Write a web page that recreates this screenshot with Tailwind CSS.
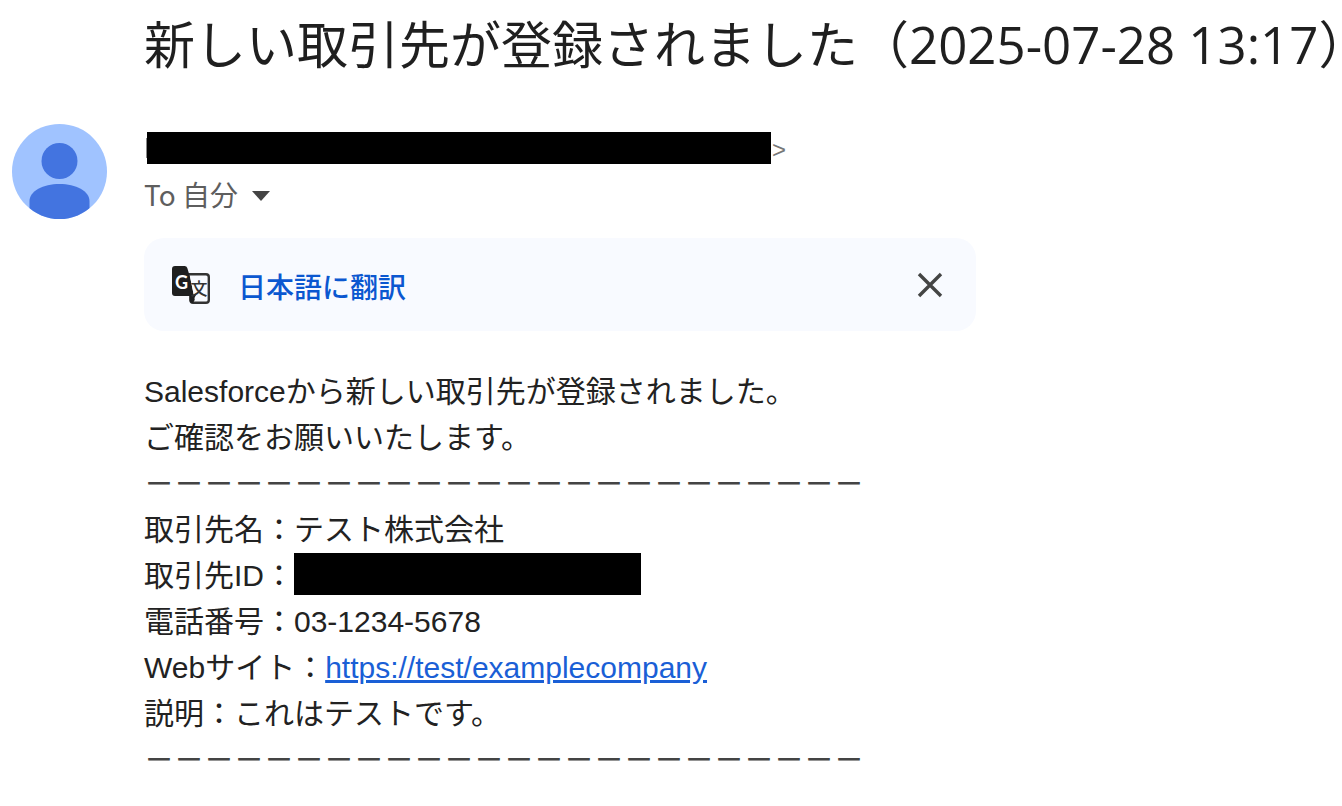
<!DOCTYPE html>
<html lang="ja">
<head>
<meta charset="utf-8">
<meta name="viewport" content="width=device-width, initial-scale=1">
<title>新しい取引先が登録されました</title>
<script src="https://cdn.jsdelivr.net/npm/@tailwindcss/browser@4"></script>
</head>
<body class="bg-white font-['Liberation_Sans','Noto_Sans_CJK_JP',sans-serif] text-[#222222]">
<main class="pb-6">
  <h1 class="pt-1 pl-36 text-[51px] leading-[80px] whitespace-nowrap text-[#1f1f1f] font-['Open_Sans','Noto_Sans_CJK_JP',sans-serif]">新しい取引先が登録されました（2025-07-28 13:17<span class="[font-feature-settings:'halt']">）</span></h1>
  <article class="mt-10 flex items-start gap-[37px] pl-3">
    <svg class="size-[95px] shrink-0" viewBox="0 0 95 95" role="img" aria-label="プロフィール画像">
      <defs><clipPath id="avatar"><circle cx="47.500" cy="47.500" r="47.500"/></clipPath></defs>
      <g clip-path="url(#avatar)">
        <rect width="95" height="95" fill="#a0c3ff"/>
        <circle cx="47.500" cy="37" r="18" fill="#4374e0"/>
        <path d="M17.500 100V77C17.500 67 31 60 47.500 60S77.500 67 77.500 77V100Z" fill="#4374e0"/>
      </g>
    </svg>
    <div class="min-w-0 flex-1">
      <header class="pt-2">
        <div class="flex h-8 items-center text-2xl text-[#777777]">
          <span class="ml-0.5 h-5 w-px bg-[#888888]"></span>
          <span class="mr-px h-8 w-[624px] bg-black"></span>
          <span class="pt-1">&gt;</span>
        </div>
        <button type="button" class="mt-2.5 flex items-center gap-3.5 text-[28px] leading-10 text-[#5e5e5e] font-['Noto_Sans_CJK_JP',sans-serif]">
          <span>To 自分</span>
          <svg class="mt-1 h-[10px] w-[18px]" viewBox="0 0 18 10" aria-hidden="true"><path d="M0 0H18L9 10Z" fill="#444444"/></svg>
        </button>
      </header>
      <section class="mt-6 flex h-[93px] max-w-[832px] items-center rounded-[20px] bg-[#f8faff] pr-8 pl-7">
        <svg class="size-[38px]" viewBox="0 0 38 38" aria-hidden="true">
          <path d="M16 8.300H34Q36.800 8.300 36.800 11V34Q36.800 36.800 34 36.800H21Q18.500 36.800 18.500 34V30Z" fill="#f8faff" stroke="#333333" stroke-width="2.400"/>
          <path d="M3 0H12.500Q14.700 0 15.300 2L18 11L22 30L25 30L21 37Q17.500 37 17.500 34V30H3Q0 30 0 27V3Q0 0 3 0Z" fill="#1f1f1f"/>
          <path d="M18 10H35V35H23L22 30Z" fill="#f8faff"/>
          <path d="M18 29H24L20 36Z" fill="#1f1f1f"/>
          <text x="9.500" y="22.500" text-anchor="middle" font-family="Lato, sans-serif" font-size="18" font-weight="700" fill="#ffffff">G</text>
          <text x="27" y="29" text-anchor="middle" font-family="Noto Sans CJK JP, sans-serif" font-size="17" font-weight="500" fill="#333333">文</text>
        </svg>
        <button type="button" class="ml-7 pt-2 text-[28px] leading-10 font-medium text-[#0b57d0]">日本語に翻訳</button>
        <button type="button" aria-label="閉じる" class="ml-auto"><svg class="size-7" viewBox="0 0 28 28" aria-hidden="true"><path d="M3 3L25 25M25 3L3 25" stroke="#444444" stroke-width="3.400" fill="none"/></svg></button>
      </section>
      <div class="mt-[38px] text-[30px] leading-[46px]">
        <p>Salesforceから新しい取引先が登録されました。</p>
        <p>ご確認をお願いいたします。</p>
        <p class="font-medium text-[#444444]">－－－－－－－－－－－－－－－－－－－－－－－－</p>
        <p>取引先名：テスト株式会社</p>
        <p class="flex items-start">取引先ID：<span class="h-[42px] w-[347px] bg-black"></span></p>
        <p>電話番号：03-1234-5678</p>
        <p>Webサイト：<a href="https://test/examplecompany" class="text-[#1a5fd6] underline">https://test/examplecompany</a></p>
        <p>説明：これはテストです。</p>
        <p class="font-medium text-[#444444]">－－－－－－－－－－－－－－－－－－－－－－－－</p>
      </div>
    </div>
  </article>
</main>
</body>
</html>
